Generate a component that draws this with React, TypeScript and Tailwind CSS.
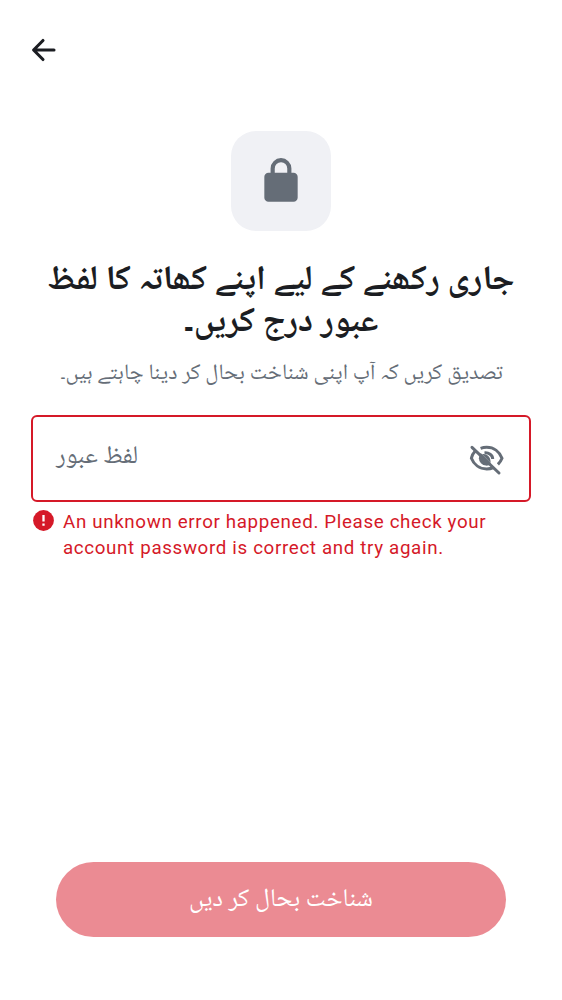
export default function App() {
  return (
    <main className="flex h-[1000px] w-[562px] flex-col bg-white font-['Roboto','Noto_Naskh_Arabic_UI','Noto_Naskh_Arabic',sans-serif] text-[#1b1d22]">
      <header className="flex h-[100px] items-center pl-7">
        <button aria-label="Back">
          <svg width="32" height="32" viewBox="0 0 32 32" fill="none" stroke="currentColor" strokeWidth="3.1" strokeLinecap="round" strokeLinejoin="round"><path d="M15 6.5 5.6 16l9.4 9.5M6 16h20" /></svg>
        </button>
      </header>
      <section className="mt-[31px] flex flex-col items-center">
        <div className="flex size-[100px] items-center justify-center rounded-[25px] bg-[#f0f1f5] text-[#656d77]">
          <svg width="50" height="50" viewBox="0 0 24 24" fill="currentColor"><path d="M6 22q-.825 0-1.412-.587A1.93 1.93 0 0 1 4 20V10q0-.825.588-1.412A1.93 1.93 0 0 1 6 8h1V6q0-2.075 1.463-3.537T12 1t3.538 1.463T17 6v2h1q.825 0 1.413.588Q20 9.175 20 10v10q0 .825-.587 1.413A1.93 1.93 0 0 1 18 22zM9 8h6V6q0-1.25-.875-2.125A2.9 2.9 0 0 0 12 3q-1.25 0-2.125.875A2.9 2.9 0 0 0 9 6z" /></svg>
        </div>
        <h1 dir="rtl" lang="ur" className="mt-[29px] text-center font-['Noto_Naskh_Arabic_UI','Noto_Naskh_Arabic',serif] text-[34.45px] leading-[42px] font-bold whitespace-nowrap">جاری رکھنے کے لیے اپنے کھاتہ کا لفظ<br />عبور درج کریں۔</h1>
        <p dir="rtl" lang="ur" className="mt-[15px] ml-px font-['Noto_Naskh_Arabic_UI','Noto_Naskh_Arabic',serif] text-[22.15px] leading-7 whitespace-nowrap text-[#656d77]">تصدیق کریں کہ آپ اپنی شناخت بحال کر دینا چاہتے ہیں۔</p>
      </section>
      <div className="mx-[31px] mt-7 flex h-[87px] items-center justify-between rounded-md border-2 border-[#d51928] px-[23px] text-[#656d77]">
        <span dir="rtl" lang="ur" className="mb-[6px] font-['Noto_Naskh_Arabic_UI','Noto_Naskh_Arabic',serif] text-[25.3px] leading-9">لفظ عبور</span>
        <svg className="mr-px mb-px" width="37" height="37" viewBox="0 0 37 37" fill="none" stroke="currentColor" strokeWidth="3">
          <path d="M12.6 8.3c2-.7 3.9-1 6.1-1 7.3 0 12.9 4.7 15.3 10.9-.9 2.3-2.3 4.4-4.1 6.2M7.4 10.8c-1.9 2-3.3 4.4-4 7.4 2.4 6.2 8 10.7 15.3 10.7 2.4 0 4.7-.5 6.8-1.4" />
          <path d="M16.5 12.9c4.1-.5 8.2 2.3 8.2 6.1" strokeWidth="3" />
          <path d="M12.8 13a7.6 7.6 0 0 0 10.4 11z" fill="currentColor" stroke="none" />
          <path d="M14 14.2c5.2-.8 8.8 2.8 8.6 8.8z" fill="currentColor" stroke="none" />
          <path d="m4 7.3 27 25.7" strokeLinecap="round" />
        </svg>
      </div>
      <div className="mx-8 mt-[6.5px] flex items-start gap-2 text-[#d51928]">
        <svg className="mt-[0.5px] shrink-0" width="23" height="23" viewBox="0 0 23 23"><circle cx="11.5" cy="11.5" r="10.4" fill="currentColor" /><path d="M11.5 6v6.5m0 2.1v2.2" stroke="white" strokeWidth="2.3" /></svg>
        <p className="text-[18.75px] leading-[26.5px] tracking-[.65px]">An unknown error happened. Please check your<br />account password is correct and try again.</p>
      </div>
      <button dir="rtl" lang="ur" className="mx-14 mt-auto mb-[62.6px] h-[75px] rounded-full bg-[#eb8b93] font-['Noto_Naskh_Arabic_UI','Noto_Naskh_Arabic',serif] text-[25.3px] text-white">شناخت بحال کر دیں</button>
    </main>
  );
}
